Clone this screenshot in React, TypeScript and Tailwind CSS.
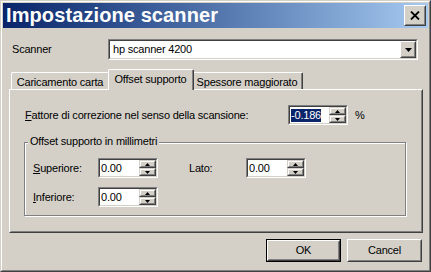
import type { ReactNode } from "react";

function Raised({ className = "", inner = "", children }: { className?: string; inner?: string; children?: ReactNode }) {
  return (
    <div className={`border border-t-white border-l-white border-r-[#404040] border-b-[#404040] ${className}`}>
      <div className={`h-full w-full border border-t-[#d4d0c8] border-l-[#d4d0c8] border-r-[#808080] border-b-[#808080] ${inner}`}>
        {children}
      </div>
    </div>
  );
}

function Sunken({ className = "", inner = "", children }: { className?: string; inner?: string; children?: ReactNode }) {
  return (
    <div className={`border border-t-[#808080] border-l-[#808080] border-r-white border-b-white ${className}`}>
      <div className={`h-full w-full border border-t-[#404040] border-l-[#404040] border-r-[#d4d0c8] border-b-[#d4d0c8] ${inner}`}>
        {children}
      </div>
    </div>
  );
}

function SpinBtn({ up }: { up?: boolean }) {
  return (
    <div className="h-[8px] border border-t-[#d4d0c8] border-l-[#d4d0c8] border-r-[#404040] border-b-[#404040] bg-[#d4d0c8]">
      <div className="flex h-full items-center justify-center border border-t-white border-l-white border-r-[#808080] border-b-[#808080]">
        <svg width="5" height="3" viewBox="0 0 5 3">
          {up ? <polygon points="2.5,0 5,3 0,3" fill="#000" /> : <polygon points="0,0 5,0 2.5,3" fill="#000" />}
        </svg>
      </div>
    </div>
  );
}

function SpinBox({ value, selected }: { value: string; selected?: boolean }) {
  return (
    <Sunken className="h-[20px] w-[60px] shrink-0" inner="flex bg-white">
      <div className="flex flex-1 items-center pl-[1px] text-[11px] leading-[13px]">
        {selected ? <span className="bg-[#0a246a] text-white">{value}</span> : <span>{value}</span>}
      </div>
      <div className="flex w-[17px] flex-col">
        <SpinBtn up />
        <SpinBtn />
      </div>
    </Sunken>
  );
}

function Tab({ label, selected, width }: { label: string; selected?: boolean; width: string }) {
  if (selected) {
    return (
      <div className={`relative z-10 -mx-[2px] -mb-[1px] h-[21px] ${width} rounded-t-[2px] border-t border-l border-r border-t-white border-l-white border-r-[#404040] bg-[#d4d0c8]`}>
        <div className="flex h-full items-start justify-center border-r border-r-[#808080] pt-[3px]">{label}</div>
      </div>
    );
  }
  return (
    <div className={`h-[17px] ${width} rounded-t-[2px] border-t border-l border-r border-t-white border-l-white border-r-[#404040]`}>
      <div className="flex h-full items-start justify-center border-r border-r-[#808080] pt-[3px]">{label}</div>
    </div>
  );
}

export default function App() {
  return (
    <div className="h-[272px] w-[431px] border border-t-[#d4d0c8] border-l-[#d4d0c8] border-r-[#404040] border-b-[#404040] bg-[#d4d0c8] font-['Liberation_Sans',Arial,sans-serif] text-[11px] leading-[13px] tracking-[-0.2px] text-black">
      <div className="h-full border border-t-white border-l-white border-r-[#808080] border-b-[#808080] p-[1px]">
        {/* title bar */}
        <div className="flex h-[25px] items-center justify-between bg-linear-to-r from-[#0a246a] to-[#a6caf0] pl-[3px] pr-[2px]">
          <span className="text-[20px] font-bold leading-[23px] tracking-[0.1px] text-white">Impostazione scanner</span>
          <Raised className="h-[21px] w-[22px] bg-[#d4d0c8]" inner="flex items-center justify-center">
            <svg width="10" height="9" viewBox="0 0 10 9">
              <path d="M1 0.5 L9 8.5 M9 0.5 L1 8.5" stroke="#000" strokeWidth="1.8" />
            </svg>
          </Raised>
        </div>

        {/* scanner row */}
        <div className="mt-[11px] flex items-center pl-[9px]">
          <span className="w-[96px]">Scanner</span>
          <Sunken className="h-[21px] w-[310px]" inner="flex items-center bg-white">
            <span className="flex-1 pl-[3px]">hp scanner 4200</span>
            <Raised className="h-full w-[16px] bg-[#d4d0c8]" inner="flex items-center justify-center">
              <svg width="7" height="4" viewBox="0 0 7 4">
                <polygon points="0,0 7,0 3.5,4" fill="#000" />
              </svg>
            </Raised>
          </Sunken>
        </div>

        {/* tabs */}
        <div className="ml-[6px] mt-[9px] w-[414px]">
          <div className="flex h-[20px] items-end pl-[2px]">
            <Tab label="Caricamento carta" width="w-[99px]" />
            <Tab label="Offset supporto" width="w-[86px]" selected />
            <Tab label="Spessore maggiorato" width="w-[111px]" />
          </div>
          <div className="h-[144px] border border-t-white border-l-white border-r-[#404040] border-b-[#404040]">
            <div className="h-full border border-t-[#d4d0c8] border-l-[#d4d0c8] border-r-[#808080] border-b-[#808080]">
              <div className="mt-[14px] flex items-center pl-[14px]">
                <span className="w-[263px]">
                  <span className="underline">F</span>attore di correzione nel senso della scansione:
                </span>
                <SpinBox value="-0.186" selected />
                <span className="ml-[7px]">%</span>
              </div>

              <div className="relative ml-[13px] mt-[17px] h-[74px] w-[382px] border border-[#808080] pl-[8px] pt-[15px] shadow-[inset_1px_1px_0_#fff,1px_1px_0_#fff]">
                <span className="absolute left-[3px] top-[-8px] bg-[#d4d0c8] px-[2px]">Offset supporto in millimetri</span>
                <div className="flex h-[20px] items-center">
                  <span className="w-[65px]">
                    <span className="underline">S</span>uperiore:
                  </span>
                  <SpinBox value="0.00" />
                  <span className="ml-[31px] w-[57px]">Lato:</span>
                  <SpinBox value="0.00" />
                </div>
                <div className="mt-[9px] flex h-[20px] items-center">
                  <span className="w-[65px]">
                    <span className="underline">I</span>nferiore:
                  </span>
                  <SpinBox value="0.00" />
                </div>
              </div>
            </div>
          </div>
        </div>

        {/* buttons */}
        <div className="mt-[6px] flex justify-end gap-[6px] pr-[6px]">
          <div className="h-[23px] w-[75px] border border-black">
            <Raised className="h-full w-full" inner="flex items-center justify-center">
              OK
            </Raised>
          </div>
          <Raised className="h-[23px] w-[75px]" inner="flex items-center justify-center">
            Cancel
          </Raised>
        </div>
      </div>
    </div>
  );
}
